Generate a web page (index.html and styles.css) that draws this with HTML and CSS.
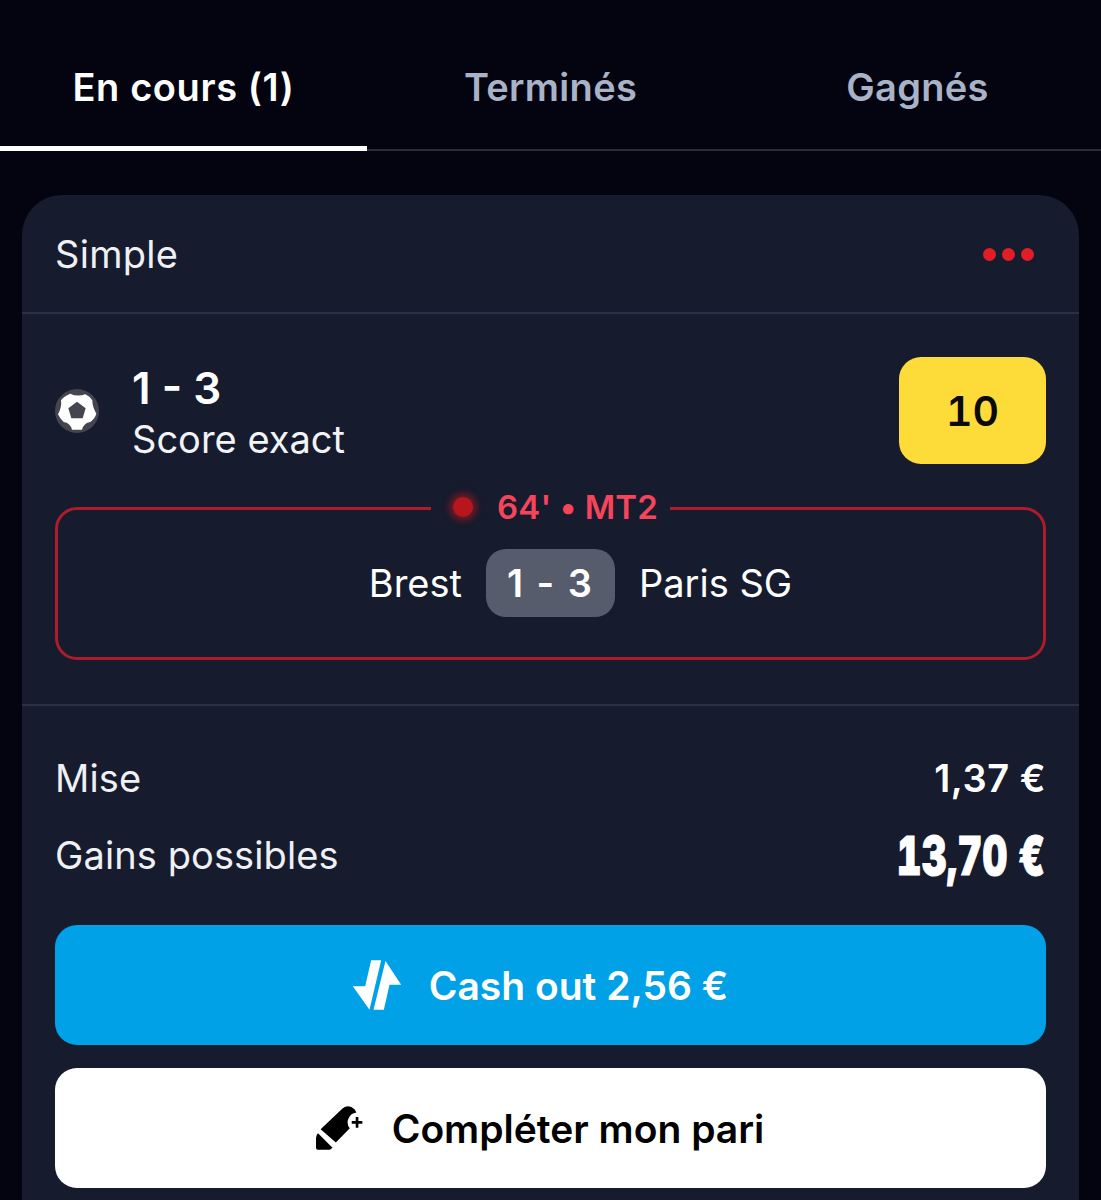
FILE: index.html
```html
<!DOCTYPE html>
<html lang="fr">
<head>
<meta charset="utf-8">
<title>Mes paris</title>
<link rel="stylesheet" href="styles.css">
</head>
<body>
<nav class="tabs">
  <div class="tab active">En cours (1)</div>
  <div class="tab">Terminés</div>
  <div class="tab">Gagnés</div>
</nav>
<main class="card">
  <header class="card-head">
    <span class="type">Simple</span>
    <span class="dots"><i></i><i></i><i></i></span>
  </header>
  <section class="bet">
    <div class="selection">
      <svg class="ball" viewBox="74 146 132 132" width="44" height="44" aria-hidden="true">
        <circle cx="140" cy="212" r="66" fill="#45454f"/>
        <path fill="#fff" d="M120 160Q140 170 165 162Q178 168 186 180Q186 200 198 220Q194 234 180 245Q160 248 155 268H125Q120 248 100 245Q88 234 83 222Q95 200 92 180Q100 168 120 160Z"/>
        <path fill="#45454f" d="M140 184L166 204L157 234H123L114 204Z"/>
      </svg>
      <div class="pick">
        <div class="pick-score">1 - 3</div>
        <div class="pick-market">Score exact</div>
      </div>
      <div class="odds">10</div>
    </div>
    <fieldset class="live">
      <legend class="live-status"><span class="pulse"></span><span>64' • MT2</span></legend>
      <div class="match">
        <span class="team team-home">Brest</span>
        <span class="score">1 - 3</span>
        <span class="team team-away">Paris SG</span>
      </div>
    </fieldset>
  </section>
  <section class="summary">
    <div class="row">
      <span>Mise</span>
      <span class="stake">1,37 €</span>
    </div>
    <div class="row row-gain">
      <span>Gains possibles</span>
      <span class="gain">13,70 €</span>
    </div>
    <button class="btn btn-cash">
      <svg viewBox="155 58 155 156" width="52" height="52" aria-hidden="true">
        <path fill="#fff" d="M215 62H245L210 210L160 140H197Z"/>
        <path fill="#fff" d="M258 64L305 135H270L253 210H222Z"/>
      </svg>
      <span>Cash out 2,56 €</span>
    </button>
    <button class="btn btn-more">
      <svg viewBox="45 495 148 138" width="49" height="46" aria-hidden="true">
        <path fill="#000" d="M62 568L128 505Q147 491 165 508L170 517A30 30 0 0 0 150 565L108 608Z"/>
        <path fill="#000" d="M54 580L98 624L90 630H56Q48 630 48 622V594Q48 586 54 580Z"/>
        <path fill="#000" d="M168 531h8v12h12v8h-12v12h-8v-12h-12v-8h12z"/>
      </svg>
      <span>Compléter mon pari</span>
    </button>
  </section>
</main>
</body>
</html>
```

FILE: styles.css
```css
* { box-sizing: border-box; }
html, body { margin: 0; height: 1200px; overflow: hidden; }
body {
  background: #03040f;
  color: #fff;
  font-family: Inter, "Liberation Sans", sans-serif;
}
.tabs {
  display: grid;
  grid-template-columns: 367px 367px 367px;
  height: 151px;
  border-bottom: 2px solid #2a2d3a;
}
.tab {
  height: 151px;
  padding-top: 62px;
  text-align: center;
  font-size: 38px;
  line-height: 50px;
  letter-spacing: 0.3px;
  font-weight: 600;
  color: #a8b3c7;
}
.tab.active {
  color: #fff;
  letter-spacing: 0.6px;
  border-bottom: 5px solid #fff;
}
.card {
  margin: 44px 22px 0;
  height: 1100px;
  background: #161b2e;
  border-radius: 40px 40px 0 0;
}
.card-head {
  display: flex;
  justify-content: space-between;
  align-items: center;
  height: 119px;
  padding: 4px 45px 3px 33px;
  border-bottom: 2px solid #2b3044;
  font-size: 38px;
  letter-spacing: 0.3px;
}
.type { color: #eef0f4; }
.dots { display: flex; gap: 6px; }
.dots i {
  width: 13px;
  height: 13px;
  border-radius: 50%;
  background: #e11d26;
}
.bet {
  height: 392px;
  padding: 43px 33px 0;
  border-bottom: 2px solid #2b3044;
}
.selection {
  display: flex;
  align-items: center;
  height: 107px;
}
.ball { flex: none; }
.pick { margin-left: 33px; padding-top: 6px; }
.pick-score {
  font-size: 44px;
  line-height: 50px;
  font-weight: 600;
}
.pick-market {
  font-size: 38px;
  line-height: 52px;
  color: #f2f3f6;
}
.odds {
  width: 147px;
  height: 107px;
  margin-left: auto;
  border-radius: 22px;
  background: #fddc3a;
  color: #0a0a0a;
  font-size: 41px;
  line-height: 108px;
  font-weight: 600;
  font-variant-numeric: tabular-nums;
  text-align: center;
}
.live {
  height: 170px;
  margin: 26px 0 0;
  padding: 0;
  border: 3px solid #ad1c2a;
  border-radius: 22px;
}
.live-status {
  display: flex;
  align-items: center;
  gap: 24px;
  margin: 0 auto;
  padding: 0 12px 2px 22px;
  height: 36px;
  color: #f6455a;
  font-size: 33px;
  font-weight: 600;
  letter-spacing: 0.1px;
}
.pulse {
  width: 20px;
  height: 20px;
  border-radius: 50%;
  background: #b8161f;
  box-shadow: 0 0 6px 4px #6d1a24;
}
.match {
  display: grid;
  grid-template-columns: 1fr auto 1fr;
  align-items: center;
  column-gap: 24px;
  margin-top: 23px;
  font-size: 38px;
}
.team-home { text-align: right; }
.score {
  width: 129px;
  height: 68px;
  border-radius: 20px;
  background: #565c6b;
  font-weight: 600;
  line-height: 68px;
  letter-spacing: 2px;
  text-align: center;
}
.summary { padding: 42px 33px 0; }
.row {
  display: flex;
  justify-content: space-between;
  align-items: center;
  height: 60px;
  font-size: 38px;
  letter-spacing: 0.1px;
  color: #eef0f4;
}
.stake { color: #fff; font-weight: 600; letter-spacing: 0.5px; }
.row-gain { height: 78px; margin-top: 8px; }
.gain {
  display: inline-block;
  font-size: 54px;
  font-weight: 900;
  letter-spacing: 0.5px;
  font-variant-numeric: tabular-nums;
  color: #fff;
  transform: scaleX(0.71);
  transform-origin: right center;
  -webkit-text-stroke: 1px #fff;
}
.btn {
  display: flex;
  align-items: center;
  justify-content: center;
  width: 100%;
  height: 120px;
  padding: 0 22px 0 0;
  border: 0;
  border-radius: 22px;
  font-family: inherit;
  font-size: 39px;
  font-weight: 600;
}
.btn-cash {
  margin-top: 31px;
  gap: 26px;
  background: #00a1e6;
  color: #fff;
}
.btn-more {
  margin-top: 23px;
  gap: 28px;
  background: #fff;
  color: #000;
}
```
